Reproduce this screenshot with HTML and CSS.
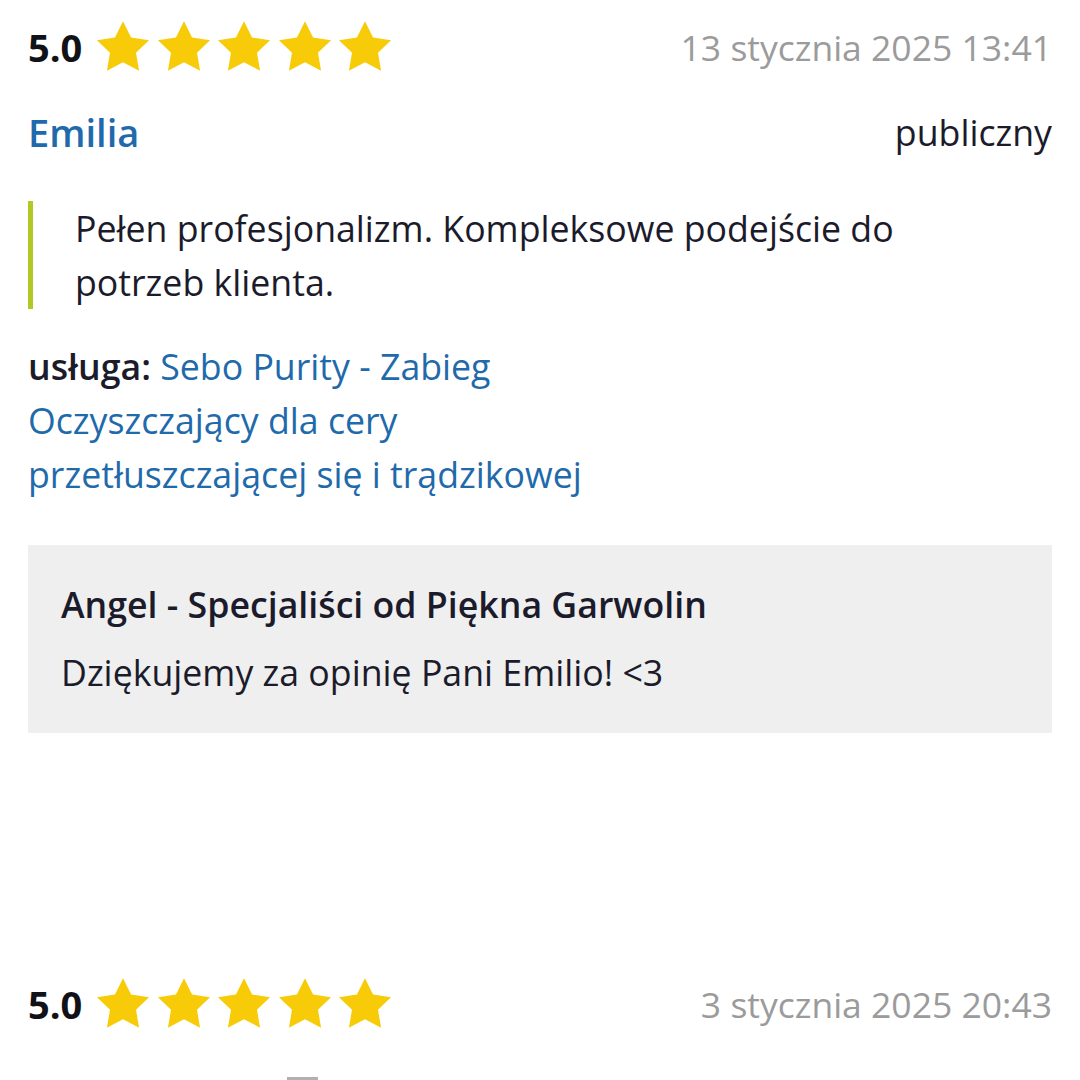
FILE: index.html
```html
<!DOCTYPE html>
<html lang="pl">
<head>
<meta charset="utf-8">
<link rel="stylesheet" href="styles.css">
</head>
<body>
<div class="page">
  <article class="review">
    <div class="review-head">
      <div class="rating">
        <span class="score">5.0</span>
        <span class="stars">
          <svg class="star" viewBox="2 2 20 19.02"><polygon points="12,2 15.09,8.26 22,9.27 17,14.14 18.18,21.02 12,17.77 5.82,21.02 7,14.14 2,9.27 8.91,8.26"/></svg>
          <svg class="star" viewBox="2 2 20 19.02"><polygon points="12,2 15.09,8.26 22,9.27 17,14.14 18.18,21.02 12,17.77 5.82,21.02 7,14.14 2,9.27 8.91,8.26"/></svg>
          <svg class="star" viewBox="2 2 20 19.02"><polygon points="12,2 15.09,8.26 22,9.27 17,14.14 18.18,21.02 12,17.77 5.82,21.02 7,14.14 2,9.27 8.91,8.26"/></svg>
          <svg class="star" viewBox="2 2 20 19.02"><polygon points="12,2 15.09,8.26 22,9.27 17,14.14 18.18,21.02 12,17.77 5.82,21.02 7,14.14 2,9.27 8.91,8.26"/></svg>
          <svg class="star" viewBox="2 2 20 19.02"><polygon points="12,2 15.09,8.26 22,9.27 17,14.14 18.18,21.02 12,17.77 5.82,21.02 7,14.14 2,9.27 8.91,8.26"/></svg>
        </span>
      </div>
      <span class="date">13 stycznia 2025 13:41</span>
    </div>
    <div class="author-row">
      <a class="author">Emilia</a>
      <span class="visibility">publiczny</span>
    </div>
    <blockquote class="quote">Pełen profesjonalizm. Kompleksowe podejście do potrzeb klienta.</blockquote>
    <p class="service"><strong>usługa:</strong> <a class="service-link">Sebo Purity - Zabieg Oczyszczający dla cery przetłuszczającej się i trądzikowej</a></p>
    <div class="reply">
      <div class="reply-title">Angel - Specjaliści od Piękna Garwolin</div>
      <div class="reply-text">Dziękujemy za opinię Pani Emilio! &lt;3</div>
    </div>
  </article>
  <article class="review review-next">
    <div class="review-head">
      <div class="rating">
        <span class="score">5.0</span>
        <span class="stars">
          <svg class="star" viewBox="2 2 20 19.02"><polygon points="12,2 15.09,8.26 22,9.27 17,14.14 18.18,21.02 12,17.77 5.82,21.02 7,14.14 2,9.27 8.91,8.26"/></svg>
          <svg class="star" viewBox="2 2 20 19.02"><polygon points="12,2 15.09,8.26 22,9.27 17,14.14 18.18,21.02 12,17.77 5.82,21.02 7,14.14 2,9.27 8.91,8.26"/></svg>
          <svg class="star" viewBox="2 2 20 19.02"><polygon points="12,2 15.09,8.26 22,9.27 17,14.14 18.18,21.02 12,17.77 5.82,21.02 7,14.14 2,9.27 8.91,8.26"/></svg>
          <svg class="star" viewBox="2 2 20 19.02"><polygon points="12,2 15.09,8.26 22,9.27 17,14.14 18.18,21.02 12,17.77 5.82,21.02 7,14.14 2,9.27 8.91,8.26"/></svg>
          <svg class="star" viewBox="2 2 20 19.02"><polygon points="12,2 15.09,8.26 22,9.27 17,14.14 18.18,21.02 12,17.77 5.82,21.02 7,14.14 2,9.27 8.91,8.26"/></svg>
        </span>
      </div>
      <span class="date">3 stycznia 2025 20:43</span>
    </div>
    <div class="next-row"><span class="next-mark"></span></div>
  </article>
</div>
</body>
</html>
```

FILE: styles.css
```css
* { box-sizing: border-box; }
html, body {
  margin: 0;
  padding: 0;
  background: #ffffff;
  overflow: hidden;
}
body {
  font-family: "Open Sans", "Noto Sans", sans-serif;
  font-size: 35.7px;
  line-height: 54px;
  color: #1b1b2b;
}
.page {
  width: 1080px;
  height: 1080px;
  padding: 20px 28px 0 28px;
}
.review-head {
  display: flex;
  justify-content: space-between;
  align-items: center;
  height: 54px;
}
.rating {
  display: flex;
  align-items: center;
}
.score {
  font-weight: 700;
  font-size: 38px;
  color: #111118;
  margin-right: 15px;
}
.stars {
  display: flex;
  gap: 8.5px;
  margin-top: -2px;
}
.star {
  width: 52px;
  height: 50px;
  fill: #f7cb07;
  display: block;
}
.date {
  color: #9b9b9b;
  font-size: 35.5px;
}
.author-row {
  display: flex;
  justify-content: space-between;
  margin-top: 31px;
}
.author {
  color: #1f6aab;
  font-weight: 600;
  font-size: 38px;
}
.visibility {
  color: #1b1b2b;
}
.quote {
  margin: 42px 0 0 0;
  padding-left: 42px;
  border-left: 5px solid #b4c824;
  max-width: 900px;
}
.service {
  margin: 30px 0 0 0;
  max-width: 580px;
}
.service strong {
  font-weight: 600;
}
.service-link {
  color: #1f6aab;
}
.reply {
  margin-top: 44px;
  background: #efefef;
  padding: 32px 33px 34px 33px;
}
.reply-title {
  font-weight: 600;
}
.reply-text {
  margin-top: 14px;
}
.review-next {
  margin-top: 244px;
}
.next-row {
  margin-top: 46px;
  padding-left: 259px;
}
.next-mark {
  display: block;
  width: 31px;
  height: 3px;
  background: #b0b0b0;
}
```
